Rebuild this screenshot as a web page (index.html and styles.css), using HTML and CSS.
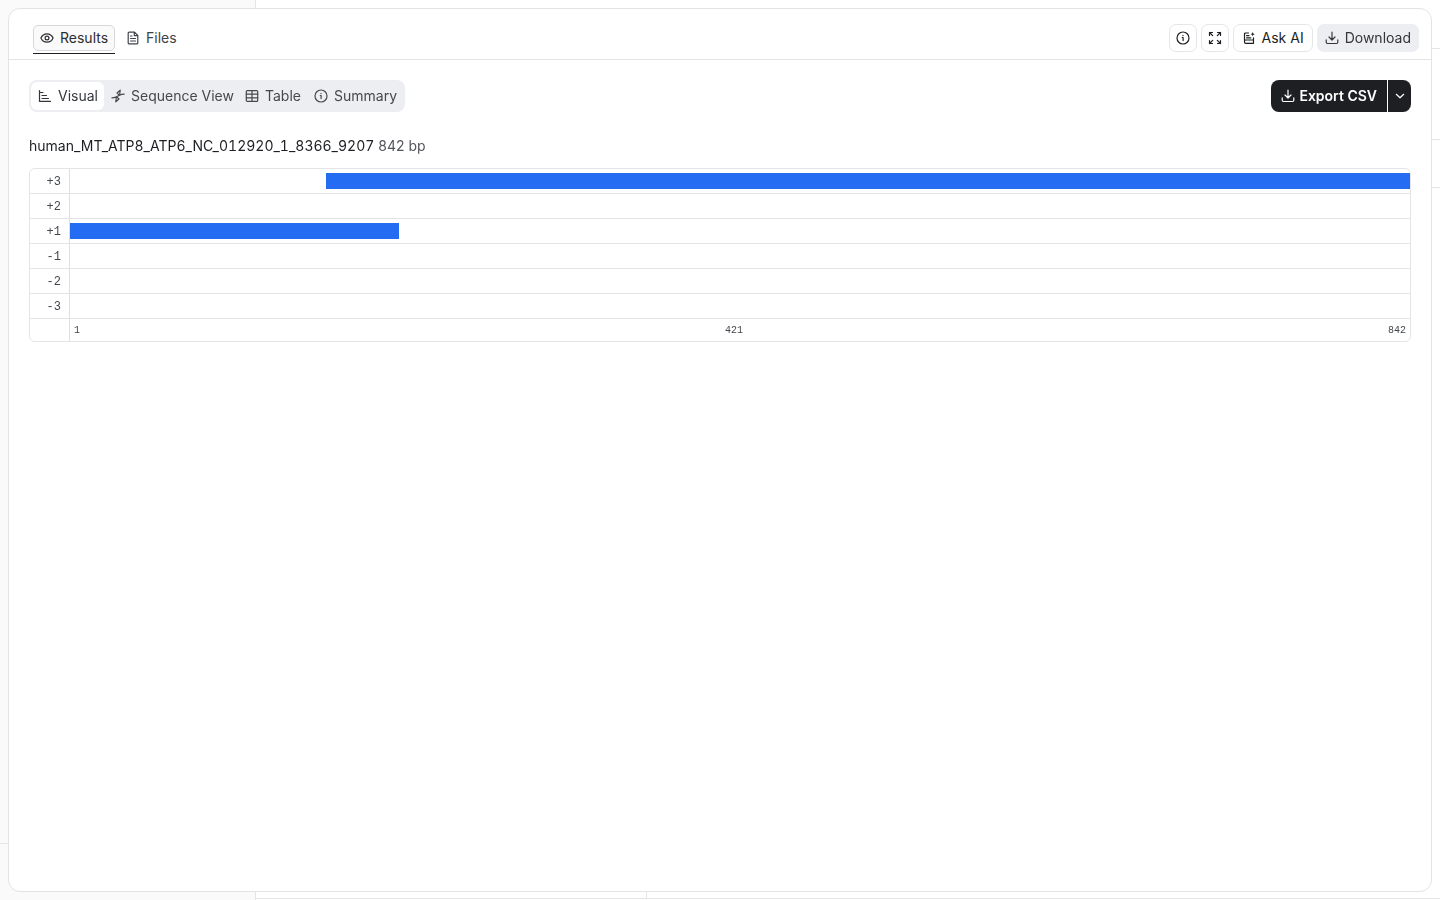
FILE: index.html
```html
<!DOCTYPE html>
<html lang="en">
<head>
<meta charset="utf-8">
<meta name="viewport" content="width=device-width, initial-scale=1">
<title>Results</title>
<link rel="stylesheet" href="styles.css">
</head>
<body>
<div class="backdrop" aria-hidden="true">
  <div class="backdrop-side"><div class="backdrop-side-foot"></div></div>
  <div class="backdrop-main">
    <div class="backdrop-bar"></div>
    <div class="backdrop-head"></div>
    <div class="backdrop-row"></div>
    <div class="backdrop-body"><div class="backdrop-col"></div></div>
  </div>
</div>
<main class="panel">
  <header class="panel-head">
    <nav class="tabs">
      <div class="tab-wrap active">
        <button class="tab" type="button">
          <svg class="icon" viewBox="0 0 14 14"><path d="M.9 7C2.2 4.200 4.400 2.800 7 2.800S11.800 4.200 13.100 7C11.800 9.800 9.600 11.200 7 11.200S2.200 9.800.9 7Z"/><circle cx="7" cy="7" r="1.900"/></svg>
          <span>Results</span>
        </button>
      </div>
      <div class="tab-wrap">
        <button class="tab" type="button">
          <svg class="icon" viewBox="0 0 14 14"><path d="M8.500 1.100H3.200a1 1 0 0 0-1 1v9.800a1 1 0 0 0 1 1h7.600a1 1 0 0 0 1-1V4.400ZM8.300 1.300v3.300h3.300M4.500 5h1.500M4.500 7.500h5M4.500 10h5"/></svg>
          <span>Files</span>
        </button>
      </div>
    </nav>
    <div class="actions">
      <button class="btn square" type="button" aria-label="Info">
        <svg class="icon" viewBox="0 0 14 14"><circle cx="7" cy="7" r="6"/><path d="M6.300 6.500H7.100V9.600M7 4.300v.3"/></svg>
      </button>
      <button class="btn square" type="button" aria-label="Expand">
        <svg class="icon" viewBox="0 0 14 14"><path d="M1.500 4.500V1.500h3M1.500 1.500l3.200 3.200M9.500 1.500h3v3M12.500 1.500L9.300 4.700M12.500 9.500v3h-3M12.500 12.500L9.300 9.300M4.500 12.500h-3v-3M1.500 12.500l3.200-3.200"/></svg>
      </button>
      <button class="btn ask" type="button">
        <svg class="icon" viewBox="0 0 14 14"><path d="M6.500 2H3.500a1 1 0 0 0-1 1v5.800M4.600 4.600h2.400M4.600 6.800h4.200M11.500 6.800v2.200H3.500a1 1 0 0 0-1 1v1a1.300 1.300 0 0 0 1.300 1.300h7.700V9"/><path class="solid" d="M10.700 1l.6 1.600 1.600.6-1.600.6-.6 1.600-.6-1.600-1.600-.6 1.600-.6Z"/></svg>
        <span>Ask AI</span>
      </button>
      <button class="btn download" type="button">
        <svg class="icon" viewBox="0 0 14 14"><path d="M7 1.200v7.600M4 6l3 3 3-3M1.200 8.800v2.500a1.200 1.200 0 0 0 1.200 1.200h9.200a1.200 1.200 0 0 0 1.200-1.200V8.800"/></svg>
        <span>Download</span>
      </button>
    </div>
  </header>
  <section class="content">
    <div class="toolbar">
      <div class="segments">
        <button class="segment selected" type="button">
          <svg class="icon" viewBox="0 0 14 14"><path d="M1.500 1.500v10.800h11M1.500 3.500h3.500M4 6.500h4.500M4 9.500h6.500"/></svg>
          <span>Visual</span>
        </button>
        <button class="segment" type="button">
          <svg class="icon" viewBox="0 0 14 14"><path d="M.9 8.900C3.600 9.100 5.400 8 7 7s3.400-2 6.100-1.800M9.200 1.200L6 4l2.600 2.200ZM4.800 12.800L8 10 5.400 7.800Z"/></svg>
          <span>Sequence View</span>
        </button>
        <button class="segment" type="button">
          <svg class="icon" viewBox="0 0 14 14"><rect x="1.300" y="1.600" width="11.400" height="10.800" rx="1"/><path d="M1.300 5.200h11.400M1.300 8.800h11.400M7 1.600v10.800"/></svg>
          <span>Table</span>
        </button>
        <button class="segment" type="button">
          <svg class="icon" viewBox="0 0 14 14"><circle cx="7" cy="7" r="6"/><path d="M6.300 6.500H7.100V9.600M7 4.300v.3"/></svg>
          <span>Summary</span>
        </button>
      </div>
      <div class="export">
        <button class="export-main" type="button">
          <svg class="icon" viewBox="0 0 14 14"><path d="M7 1.200v7.600M4 6l3 3 3-3M1.200 8.800v2.500a1.200 1.200 0 0 0 1.200 1.200h9.200a1.200 1.200 0 0 0 1.200-1.200V8.800"/></svg>
          <span>Export CSV</span>
        </button>
        <button class="export-more" type="button" aria-label="More export options">
          <svg class="icon" viewBox="0 0 14 14"><path d="M3.300 5.300L7 8.800l3.700-3.500"/></svg>
        </button>
      </div>
    </div>
    <h1 class="title"><span class="name">human_MT_ATP8_ATP6_NC_012920_1_8366_9207</span><span class="length">842 bp</span></h1>
    <div class="frames">
      <div class="frame"><div class="frame-label">+3</div><div class="track"><div class="orf" style="margin-left:19.12%;width:80.88%"></div></div></div>
      <div class="frame"><div class="frame-label">+2</div><div class="track"></div></div>
      <div class="frame"><div class="frame-label">+1</div><div class="track"><div class="orf" style="width:24.58%"></div></div></div>
      <div class="frame"><div class="frame-label">-1</div><div class="track"></div></div>
      <div class="frame"><div class="frame-label">-2</div><div class="track"></div></div>
      <div class="frame"><div class="frame-label">-3</div><div class="track"></div></div>
      <div class="frame axis"><div class="frame-label"></div><div class="ticks"><span>1</span><span>421</span><span>842</span></div></div>
    </div>
  </section>
</main>
</body>
</html>
```
FILE: styles.css
```css
* { box-sizing: border-box; }
body {
  margin: 0;
  min-height: 100vh;
  background: #fff;
  color: #1d1f22;
  font: 14px/20px Inter, "Liberation Sans", sans-serif;
}
button {
  font: inherit;
  color: inherit;
  border: 0;
  margin: 0;
  padding: 0;
  background: none;
  white-space: nowrap;
  cursor: pointer;
}
.icon {
  display: block;
  flex: none;
  width: 14px;
  height: 14px;
  fill: none;
  stroke: currentColor;
  stroke-width: 1.2;
  stroke-linecap: round;
  stroke-linejoin: round;
}
.solid { fill: currentColor; stroke: none; }

.backdrop { position: fixed; inset: 0; display: flex; }
.backdrop-side {
  display: flex;
  align-items: flex-end;
  width: 256px;
  background: #fafafa;
  border-right: 1px solid #e4e5e7;
}
.backdrop-side-foot { flex: 1; height: 57px; border-top: 1px solid #e4e5e7; }
.backdrop-main { flex: 1; display: flex; flex-direction: column; padding-bottom: 1px; }
.backdrop-main > div { border-bottom: 1px solid #e4e5e7; }
.backdrop-bar { height: 49px; }
.backdrop-head { height: 91px; }
.backdrop-row { height: 48px; }
.backdrop-body { flex: 1; }
.backdrop-col { width: 391px; height: 100%; border-right: 1px solid #e4e5e7; }

.panel {
  position: fixed;
  inset: 8px;
  display: flex;
  flex-direction: column;
  background: #fff;
  border: 1px solid #e2e3e5;
  border-radius: 12px;
  overflow: auto;
}
.panel-head {
  display: flex;
  align-items: flex-start;
  justify-content: space-between;
  padding: 15px 12px 5px 24px;
  border-bottom: 1px solid #e2e3e5;
}
.tabs, .actions { display: flex; gap: 4px; }
.tab-wrap { padding: 1px 0 2px; border-bottom: 1px solid transparent; color: #404349; }
.tab-wrap.active { color: #2c2e33; border-color: #1d1f22; }
.tab {
  display: flex;
  align-items: center;
  gap: 6px;
  height: 26px;
  padding: 0 6px;
  border: 1px solid transparent;
  border-radius: 5px;
}
.active .tab { background: #fafafa; border-color: #d5d7da; }
.btn {
  display: flex;
  align-items: center;
  justify-content: center;
  gap: 6px;
  height: 28px;
  padding: 0 8px;
  border: 1px solid #e4e6e9;
  border-radius: 7px;
  background: #fff;
}
.square { width: 28px; padding: 0; }
.download { padding: 0 7px; background: #eceef1; border-color: #eceef1; color: #33363b; }

.content { padding: 20px; }
.toolbar { display: flex; justify-content: space-between; }
.segments {
  display: grid;
  grid-template-columns: 73px 134px 69px 96px;
  padding: 2px;
  border-radius: 8px;
  background: #eceef1;
  color: #45484e;
}
.segment {
  display: flex;
  align-items: center;
  gap: 6px;
  height: 28px;
  padding-left: 7px;
  border-radius: 6px;
}
.selected { background: #fff; color: #33363b; }
.export { display: flex; gap: 1px; height: 32px; color: #fff; font-weight: 600; }
.export button { display: flex; align-items: center; justify-content: center; background: #1d1f22; }
.export .export-main { gap: 4px; padding: 0 10px; border-radius: 8px 0 0 8px; }
.export .export-more { width: 23px; border-radius: 0 8px 8px 0; }

.title { display: flex; gap: 4px; margin: 24px 0 12px; font: inherit; }
.name { font-variant-numeric: tabular-nums; }
.length { color: #53565c; }

.frames { border: 1px solid #e2e4e7; border-radius: 6px; overflow: hidden; }
.frame { display: flex; height: 25px; border-bottom: 1px solid #e2e4e7; }
.frame-label {
  width: 40px;
  padding-right: 8px;
  border-right: 1px solid #dddfe3;
  color: #44474d;
  font: 12px/26px "Liberation Mono", monospace;
  text-align: right;
}
.track { flex: 1; padding: 4px 0; }
.orf { height: 16px; background: #246df2; }
.axis { height: 22px; border-bottom: 0; }
.ticks {
  flex: 1;
  display: flex;
  justify-content: space-between;
  padding: 0 4px;
  color: #44474d;
  font: 10px/24px "Liberation Mono", monospace;
}
```
